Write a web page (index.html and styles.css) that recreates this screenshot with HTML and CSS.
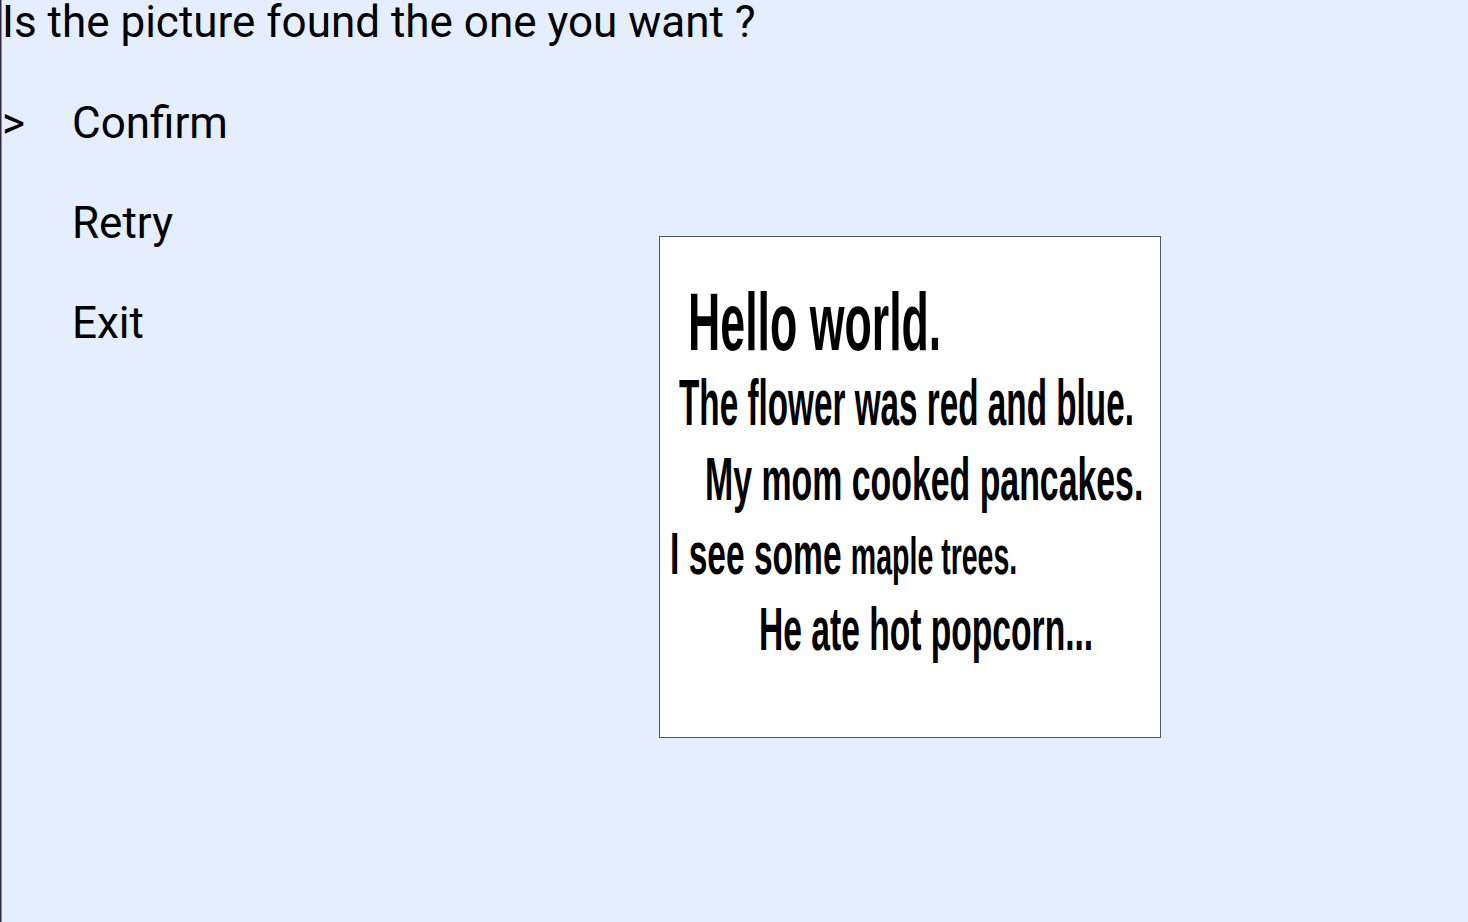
FILE: index.html
```html
<!DOCTYPE html>
<html lang="en">
<head>
<meta charset="utf-8">
<title>Picture check</title>
<link rel="stylesheet" href="styles.css">
</head>
<body>
<div class="screen">
  <div class="question">Is the picture found the one you want ?</div>
  <div class="content">
    <ul class="menu">
      <li class="item selected"><span class="marker">&gt;</span><span class="label">Confirm</span></li>
      <li class="item"><span class="marker"></span><span class="label">Retry</span></li>
      <li class="item"><span class="marker"></span><span class="label">Exit</span></li>
    </ul>
    <div class="picture">
      <div class="pline l1"><span class="squeeze">Hello world.</span></div>
      <div class="pline l2"><span class="squeeze">The flower was red and blue.</span></div>
      <div class="pline l3"><span class="squeeze">My mom cooked pancakes.</span></div>
      <div class="pline l4"><span class="squeeze">I see some <span class="small">maple trees.</span></span></div>
      <div class="pline l5"><span class="squeeze">He ate hot popcorn...</span></div>
    </div>
  </div>
</div>
</body>
</html>
```

FILE: styles.css
```css
html, body {
  margin: 0;
  padding: 0;
  height: 100%;
}
body {
  background: #e4eeff;
  border-left: 1px solid #2f2a40;
  box-sizing: border-box;
  overflow: hidden;
  font-family: Roboto, "Noto Sans", sans-serif;
  color: #000;
}
.screen {
  height: 100%;
  border-left: 1px solid #8f7fc8;
  box-sizing: border-box;
}
.question {
  font-size: 44px;
  line-height: 44px;
  height: 44px;
  white-space: nowrap;
}
.content {
  display: flex;
  align-items: flex-start;
}
.menu {
  list-style: none;
  margin: 29px 0 0 0;
  padding: 0;
  width: 657px;
  flex: none;
}
.item {
  display: flex;
  font-size: 44px;
  line-height: 100px;
  height: 100px;
}
.marker {
  width: 70px;
  flex: none;
}
.picture {
  margin-top: 192px;
  width: 500px;
  flex: none;
  background: #fff;
  border: 1px solid #515667;
  padding-top: 40px;
  height: 460px;
  font-family: "Liberation Sans", Arial, sans-serif;
  font-weight: bold;
  overflow: hidden;
}
.pline {
  height: 75px;
  line-height: 75px;
  white-space: nowrap;
}
.squeeze {
  display: inline-block;
  transform-origin: 0 50%;
}
.l1 {
  font-size: 82px;
  height: 89px;
  line-height: 89px;
  padding-left: 28px;
}
.l1 .squeeze { transform: scaleX(0.545); }
.l2 {
  font-size: 64px;
  padding-left: 19px;
}
.l2 .squeeze { transform: scaleX(0.52); }
.l3 {
  font-size: 62px;
  padding-left: 45px;
}
.l3 .squeeze { transform: scaleX(0.546); }
.l4 {
  font-size: 60px;
  padding-left: 10px;
}
.l4 .squeeze { transform: scaleX(0.559); }
.l4 .small { font-size: 51px; }
.l5 {
  font-size: 62px;
  padding-left: 99px;
}
.l5 .squeeze { transform: scaleX(0.542); }
```
